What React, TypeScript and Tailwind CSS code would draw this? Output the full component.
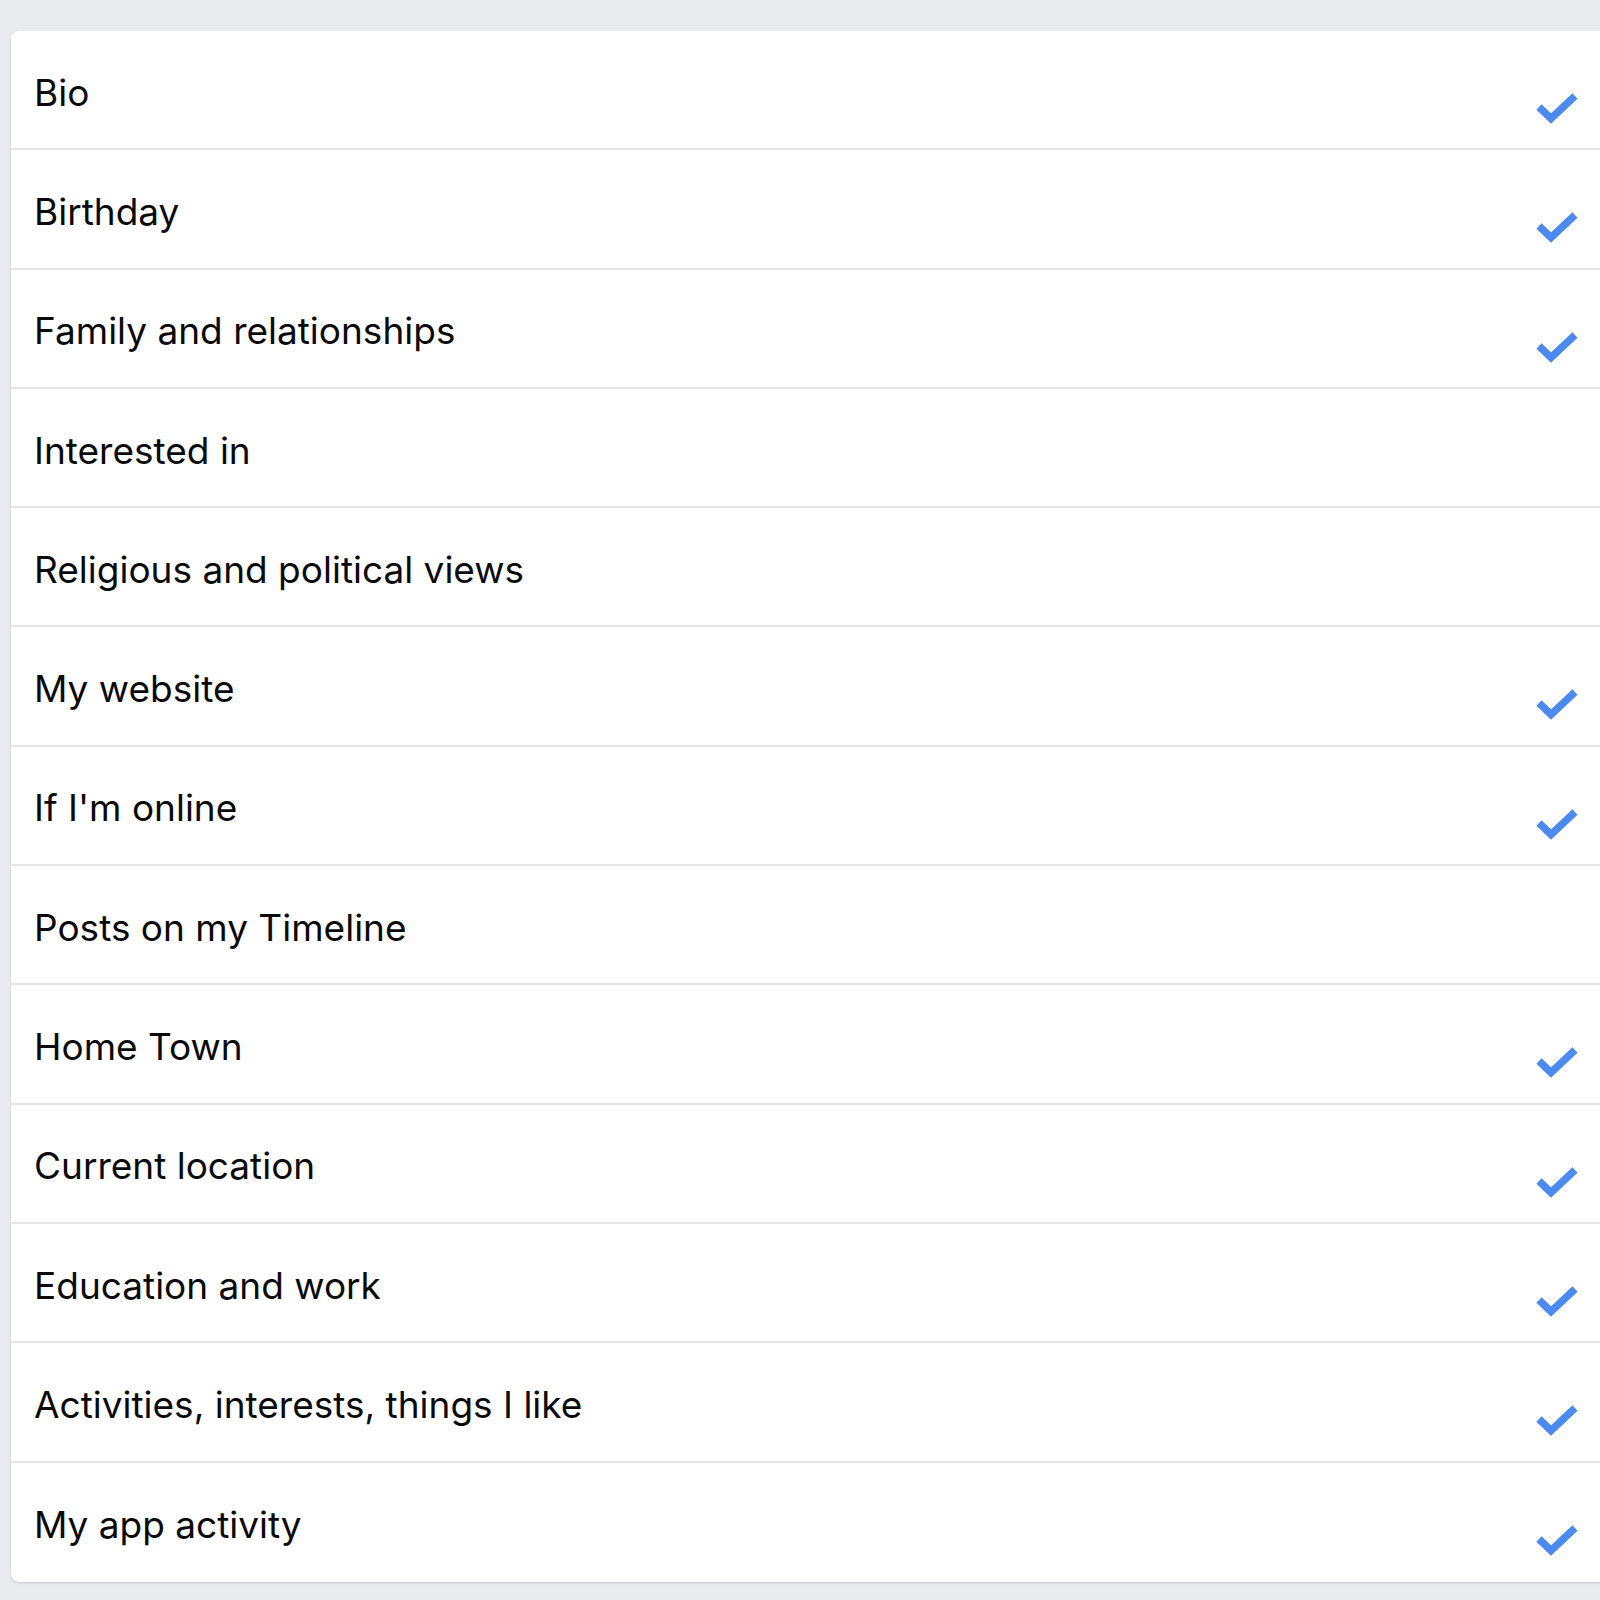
const rows: { label: string; checked: boolean }[] = [
  { label: "Bio", checked: true },
  { label: "Birthday", checked: true },
  { label: "Family and relationships", checked: true },
  { label: "Interested in", checked: false },
  { label: "Religious and political views", checked: false },
  { label: "My website", checked: true },
  { label: "If I'm online", checked: true },
  { label: "Posts on my Timeline", checked: false },
  { label: "Home Town", checked: true },
  { label: "Current location", checked: true },
  { label: "Education and work", checked: true },
  { label: "Activities, interests, things I like", checked: true },
  { label: "My app activity", checked: true },
];

function Check() {
  return (
    <svg width="45" height="35" viewBox="0 0 45 35" fill="none">
      <polyline
        points="4,17 16,28.5 40,6"
        stroke="#4d8af0"
        strokeWidth="7.5"
        strokeLinecap="butt"
        strokeLinejoin="miter"
      />
    </svg>
  );
}

export default function App() {
  return (
    <div className="w-[1600px] h-[1600px] overflow-hidden bg-[#e9eaee] pt-[31px] pl-[11px] font-['Inter','Liberation_Sans',sans-serif]">
      <div className="w-[1620px] bg-white rounded-l-lg shadow-[0_1px_2px_rgba(0,0,0,0.15)] overflow-hidden">
        {rows.map((row, i) => (
          <div
            key={row.label}
            className={`relative flex items-center h-[119.3px] pl-[23px] ${
              i < rows.length - 1 ? "border-b-2 border-[#e4e5e7]" : ""
            }`}
          >
            <span className="pt-[5px] text-[37px] leading-none text-[#0a0a0a]">{row.label}</span>
            {row.checked && (
              <div className="absolute left-[1524px] top-[59px]">
                <Check />
              </div>
            )}
          </div>
        ))}
      </div>
    </div>
  );
}
